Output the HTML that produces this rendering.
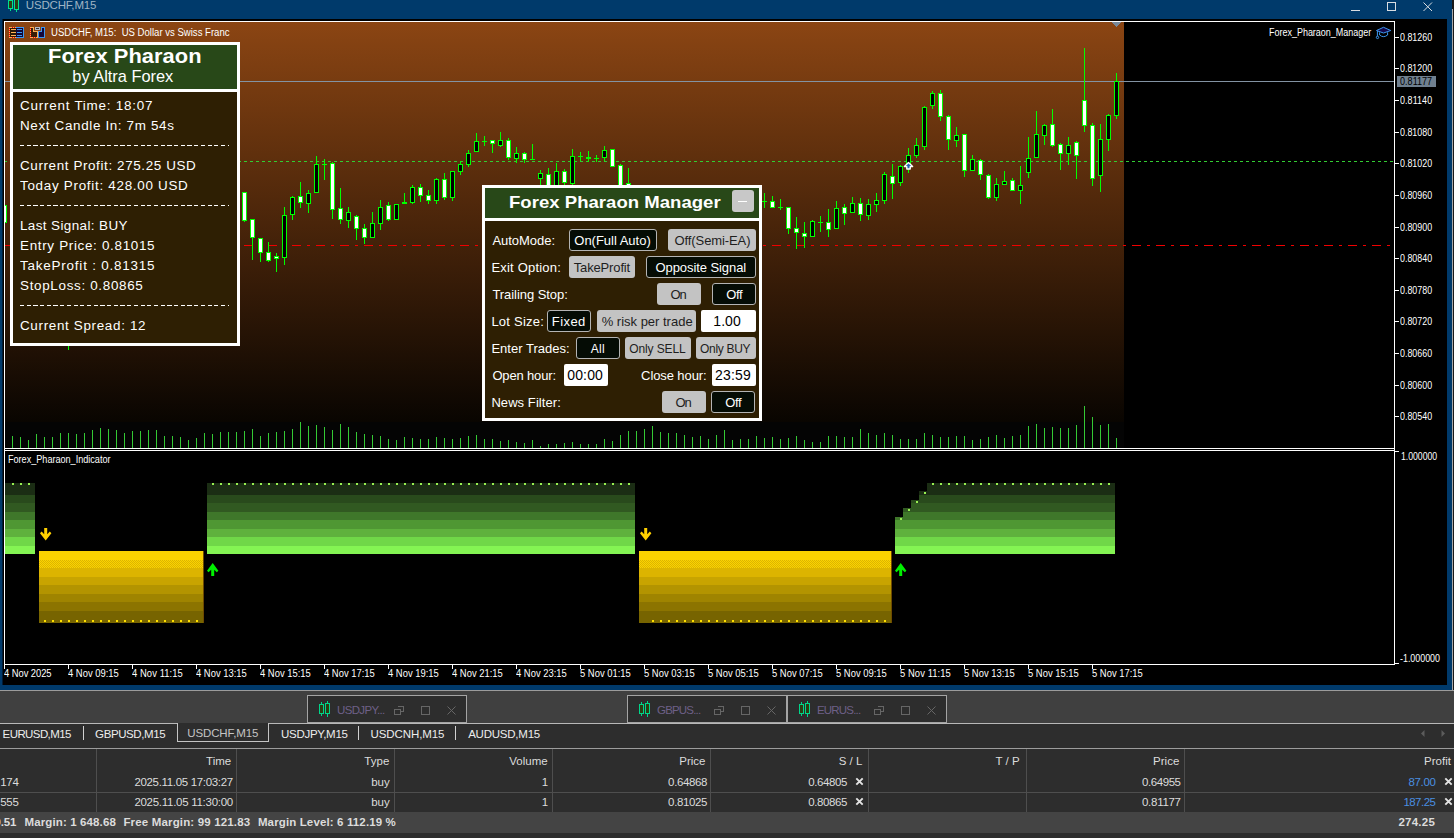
<!DOCTYPE html>
<html><head><meta charset="utf-8"><title>USDCHF,M15</title>
<style>
html,body{margin:0;padding:0}
body{width:1454px;height:838px;position:relative;overflow:hidden;background:#2d2d2d;font-family:"Liberation Sans",sans-serif}
div,span,svg{position:absolute}
.t{white-space:pre;line-height:1;transform-origin:0 0;font-family:"Liberation Sans",sans-serif}
.bd{border-radius:3px;box-sizing:border-box;border:1px solid #b4b4b4;background:#050c05}
.bl{border-radius:3px;background:#c3c3c3}
.bw{border-radius:2px;background:#fff}
</style></head><body>
<div style="left:0px;top:0px;width:1452px;height:690px;background:#003a6b;"></div><div style="left:1452px;top:0px;width:2px;height:690px;background:#1a1a1a;"></div><div style="left:1452px;top:9px;width:1px;height:682px;background:#a8a8a8;"></div><div style="left:2px;top:19px;width:1445px;height:666px;background:#000;"></div><div style="left:2px;top:19px;width:1px;height:666px;background:#001c36;"></div><div style="left:4px;top:21px;width:1391px;height:1px;background:#fff;"></div><div style="left:4px;top:21px;width:1px;height:644px;background:#fff;"></div><div style="left:1394px;top:21px;width:1px;height:644px;background:#fff;"></div><div style="left:4px;top:448px;width:1391px;height:1px;background:#fff;"></div><div style="left:4px;top:450px;width:1391px;height:1px;background:#fff;"></div><div style="left:4px;top:664px;width:1391px;height:1px;background:#fff;"></div><div style="left:5px;top:22px;width:1119px;height:400px;background:linear-gradient(to bottom,#8b4513 0%,#090501 100%)"></div><div style="left:5px;top:422px;width:1119px;height:26px;background:#040404;"></div><svg width="1454" height="700" viewBox="0 0 1454 700" style="left:0;top:0" shape-rendering="crispEdges"><rect x="5" y="81" width="1389" height="1" fill="#8393a3"/><path d="M5 161.5h2M10 161.5h3M16 161.5h3M22 161.5h3M28 161.5h3M34 161.5h3M40 161.5h3M46 161.5h3M52 161.5h3M58 161.5h3M64 161.5h3M70 161.5h3M76 161.5h3M82 161.5h3M88 161.5h3M94 161.5h3M100 161.5h3M106 161.5h3M112 161.5h3M118 161.5h3M124 161.5h3M130 161.5h3M136 161.5h3M142 161.5h3M148 161.5h3M154 161.5h3M160 161.5h3M166 161.5h3M172 161.5h3M178 161.5h3M184 161.5h3M190 161.5h3M196 161.5h3M202 161.5h3M208 161.5h3M214 161.5h3M220 161.5h3M226 161.5h3M232 161.5h3M238 161.5h3M244 161.5h3M250 161.5h3M256 161.5h3M262 161.5h3M268 161.5h3M274 161.5h3M280 161.5h3M286 161.5h3M292 161.5h3M298 161.5h3M304 161.5h3M310 161.5h3M316 161.5h3M322 161.5h3M328 161.5h3M334 161.5h3M340 161.5h3M346 161.5h3M352 161.5h3M358 161.5h3M364 161.5h3M370 161.5h3M376 161.5h3M382 161.5h3M388 161.5h3M394 161.5h3M400 161.5h3M406 161.5h3M412 161.5h3M418 161.5h3M424 161.5h3M430 161.5h3M436 161.5h3M442 161.5h3M448 161.5h3M454 161.5h3M460 161.5h3M466 161.5h3M472 161.5h3M478 161.5h3M484 161.5h3M490 161.5h3M496 161.5h3M502 161.5h3M508 161.5h3M514 161.5h3M520 161.5h3M526 161.5h3M532 161.5h3M538 161.5h3M544 161.5h3M550 161.5h3M556 161.5h3M562 161.5h3M568 161.5h3M574 161.5h3M580 161.5h3M586 161.5h3M592 161.5h3M598 161.5h3M604 161.5h3M610 161.5h3M616 161.5h3M622 161.5h3M628 161.5h3M634 161.5h3M640 161.5h3M646 161.5h3M652 161.5h3M658 161.5h3M664 161.5h3M670 161.5h3M676 161.5h3M682 161.5h3M688 161.5h3M694 161.5h3M700 161.5h3M706 161.5h3M712 161.5h3M718 161.5h3M724 161.5h3M730 161.5h3M736 161.5h3M742 161.5h3M748 161.5h3M754 161.5h3M760 161.5h3M766 161.5h3M772 161.5h3M778 161.5h3M784 161.5h3M790 161.5h3M796 161.5h3M802 161.5h3M808 161.5h3M814 161.5h3M820 161.5h3M826 161.5h3M832 161.5h3M838 161.5h3M844 161.5h3M850 161.5h3M856 161.5h3M862 161.5h3M868 161.5h3M874 161.5h3M880 161.5h3M886 161.5h3M892 161.5h3M898 161.5h3M904 161.5h3M910 161.5h3M916 161.5h3M922 161.5h3M928 161.5h3M934 161.5h3M940 161.5h3M946 161.5h3M952 161.5h3M958 161.5h3M964 161.5h3M970 161.5h3M976 161.5h3M982 161.5h3M988 161.5h3M994 161.5h3M1000 161.5h3M1006 161.5h3M1012 161.5h3M1018 161.5h3M1024 161.5h3M1030 161.5h3M1036 161.5h3M1042 161.5h3M1048 161.5h3M1054 161.5h3M1060 161.5h3M1066 161.5h3M1072 161.5h3M1078 161.5h3M1084 161.5h3M1090 161.5h3M1096 161.5h3M1102 161.5h3M1108 161.5h3M1114 161.5h3M1120 161.5h3M1126 161.5h3M1132 161.5h3M1138 161.5h3M1144 161.5h3M1150 161.5h3M1156 161.5h3M1162 161.5h3M1168 161.5h3M1174 161.5h3M1180 161.5h3M1186 161.5h3M1192 161.5h3M1198 161.5h3M1204 161.5h3M1210 161.5h3M1216 161.5h3M1222 161.5h3M1228 161.5h3M1234 161.5h3M1240 161.5h3M1246 161.5h3M1252 161.5h3M1258 161.5h3M1264 161.5h3M1270 161.5h3M1276 161.5h3M1282 161.5h3M1288 161.5h3M1294 161.5h3M1300 161.5h3M1306 161.5h3M1312 161.5h3M1318 161.5h3M1324 161.5h3M1330 161.5h3M1336 161.5h3M1342 161.5h3M1348 161.5h3M1354 161.5h3M1360 161.5h3M1366 161.5h3M1372 161.5h3M1378 161.5h3M1384 161.5h3M1390 161.5h3" stroke="#32cd32" stroke-width="1" fill="none"/><path d="M5 245.5h8M19 245.5h3M28 245.5h9M43 245.5h3M52 245.5h9M67 245.5h3M76 245.5h9M91 245.5h3M100 245.5h9M115 245.5h3M124 245.5h9M139 245.5h3M148 245.5h9M163 245.5h3M172 245.5h9M187 245.5h3M196 245.5h9M211 245.5h3M220 245.5h9M235 245.5h3M244 245.5h9M259 245.5h3M268 245.5h9M283 245.5h3M292 245.5h9M307 245.5h3M316 245.5h9M331 245.5h3M340 245.5h9M355 245.5h3M364 245.5h9M379 245.5h3M388 245.5h9M403 245.5h3M412 245.5h9M427 245.5h3M436 245.5h9M451 245.5h3M460 245.5h9M475 245.5h3M484 245.5h9M499 245.5h3M508 245.5h9M523 245.5h3M532 245.5h9M547 245.5h3M556 245.5h9M571 245.5h3M580 245.5h9M595 245.5h3M604 245.5h9M619 245.5h3M628 245.5h9M643 245.5h3M652 245.5h9M667 245.5h3M676 245.5h9M691 245.5h3M700 245.5h9M715 245.5h3M724 245.5h9M739 245.5h3M748 245.5h9M763 245.5h3M772 245.5h9M787 245.5h3M796 245.5h9M811 245.5h3M820 245.5h9M835 245.5h3M844 245.5h9M859 245.5h3M868 245.5h9M883 245.5h3M892 245.5h9M907 245.5h3M916 245.5h9M931 245.5h3M940 245.5h9M955 245.5h3M964 245.5h9M979 245.5h3M988 245.5h9M1003 245.5h3M1012 245.5h9M1027 245.5h3M1036 245.5h9M1051 245.5h3M1060 245.5h9M1075 245.5h3M1084 245.5h9M1099 245.5h3M1108 245.5h9M1123 245.5h3M1132 245.5h9M1147 245.5h3M1156 245.5h9M1171 245.5h3M1180 245.5h9M1195 245.5h3M1204 245.5h9M1219 245.5h3M1228 245.5h9M1243 245.5h3M1252 245.5h9M1267 245.5h3M1276 245.5h9M1291 245.5h3M1300 245.5h9M1315 245.5h3M1324 245.5h9M1339 245.5h3M1348 245.5h9M1363 245.5h3M1372 245.5h9M1387 245.5h3" stroke="#f00000" stroke-width="1" fill="none"/><rect x="12" y="436" width="1" height="12" fill="#34c934"/><rect x="20" y="437" width="1" height="11" fill="#34c934"/><rect x="28" y="440" width="1" height="8" fill="#34c934"/><rect x="36" y="434" width="1" height="14" fill="#34c934"/><rect x="44" y="437" width="1" height="11" fill="#34c934"/><rect x="52" y="437" width="1" height="11" fill="#34c934"/><rect x="60" y="433" width="1" height="15" fill="#34c934"/><rect x="68" y="433" width="1" height="15" fill="#34c934"/><rect x="76" y="434" width="1" height="14" fill="#34c934"/><rect x="84" y="433" width="1" height="15" fill="#34c934"/><rect x="92" y="430" width="1" height="18" fill="#34c934"/><rect x="100" y="428" width="1" height="20" fill="#34c934"/><rect x="108" y="429" width="1" height="19" fill="#34c934"/><rect x="116" y="430" width="1" height="18" fill="#34c934"/><rect x="124" y="433" width="1" height="15" fill="#34c934"/><rect x="132" y="431" width="1" height="17" fill="#34c934"/><rect x="140" y="431" width="1" height="17" fill="#34c934"/><rect x="148" y="430" width="1" height="18" fill="#34c934"/><rect x="156" y="430" width="1" height="18" fill="#34c934"/><rect x="164" y="436" width="1" height="12" fill="#34c934"/><rect x="172" y="436" width="1" height="12" fill="#34c934"/><rect x="180" y="437" width="1" height="11" fill="#34c934"/><rect x="188" y="440" width="1" height="8" fill="#34c934"/><rect x="196" y="438" width="1" height="10" fill="#34c934"/><rect x="204" y="433" width="1" height="15" fill="#34c934"/><rect x="212" y="434" width="1" height="14" fill="#34c934"/><rect x="220" y="432" width="1" height="16" fill="#34c934"/><rect x="228" y="432" width="1" height="16" fill="#34c934"/><rect x="236" y="432" width="1" height="16" fill="#34c934"/><rect x="244" y="431" width="1" height="17" fill="#34c934"/><rect x="252" y="429" width="1" height="19" fill="#34c934"/><rect x="260" y="436" width="1" height="12" fill="#34c934"/><rect x="268" y="433" width="1" height="15" fill="#34c934"/><rect x="276" y="432" width="1" height="16" fill="#34c934"/><rect x="284" y="431" width="1" height="17" fill="#34c934"/><rect x="292" y="429" width="1" height="19" fill="#34c934"/><rect x="300" y="422" width="1" height="26" fill="#34c934"/><rect x="308" y="426" width="1" height="22" fill="#34c934"/><rect x="316" y="425" width="1" height="23" fill="#34c934"/><rect x="324" y="427" width="1" height="21" fill="#34c934"/><rect x="332" y="430" width="1" height="18" fill="#34c934"/><rect x="340" y="424" width="1" height="24" fill="#34c934"/><rect x="348" y="427" width="1" height="21" fill="#34c934"/><rect x="356" y="432" width="1" height="16" fill="#34c934"/><rect x="364" y="434" width="1" height="14" fill="#34c934"/><rect x="372" y="435" width="1" height="13" fill="#34c934"/><rect x="380" y="436" width="1" height="12" fill="#34c934"/><rect x="388" y="439" width="1" height="9" fill="#34c934"/><rect x="396" y="440" width="1" height="8" fill="#34c934"/><rect x="404" y="437" width="1" height="11" fill="#34c934"/><rect x="412" y="438" width="1" height="10" fill="#34c934"/><rect x="420" y="439" width="1" height="9" fill="#34c934"/><rect x="428" y="439" width="1" height="9" fill="#34c934"/><rect x="436" y="437" width="1" height="11" fill="#34c934"/><rect x="444" y="438" width="1" height="10" fill="#34c934"/><rect x="452" y="439" width="1" height="9" fill="#34c934"/><rect x="460" y="438" width="1" height="10" fill="#34c934"/><rect x="468" y="436" width="1" height="12" fill="#34c934"/><rect x="476" y="435" width="1" height="13" fill="#34c934"/><rect x="484" y="439" width="1" height="9" fill="#34c934"/><rect x="492" y="439" width="1" height="9" fill="#34c934"/><rect x="500" y="441" width="1" height="7" fill="#34c934"/><rect x="508" y="440" width="1" height="8" fill="#34c934"/><rect x="516" y="442" width="1" height="6" fill="#34c934"/><rect x="524" y="443" width="1" height="5" fill="#34c934"/><rect x="532" y="440" width="1" height="8" fill="#34c934"/><rect x="540" y="446" width="1" height="2" fill="#34c934"/><rect x="548" y="444" width="1" height="4" fill="#34c934"/><rect x="556" y="444" width="1" height="4" fill="#34c934"/><rect x="564" y="443" width="1" height="5" fill="#34c934"/><rect x="572" y="442" width="1" height="6" fill="#34c934"/><rect x="580" y="444" width="1" height="4" fill="#34c934"/><rect x="588" y="444" width="1" height="4" fill="#34c934"/><rect x="596" y="444" width="1" height="4" fill="#34c934"/><rect x="604" y="439" width="1" height="9" fill="#34c934"/><rect x="612" y="441" width="1" height="7" fill="#34c934"/><rect x="620" y="435" width="1" height="13" fill="#34c934"/><rect x="628" y="431" width="1" height="17" fill="#34c934"/><rect x="636" y="431" width="1" height="17" fill="#34c934"/><rect x="644" y="429" width="1" height="19" fill="#34c934"/><rect x="652" y="426" width="1" height="22" fill="#34c934"/><rect x="660" y="432" width="1" height="16" fill="#34c934"/><rect x="668" y="433" width="1" height="15" fill="#34c934"/><rect x="676" y="433" width="1" height="15" fill="#34c934"/><rect x="684" y="435" width="1" height="13" fill="#34c934"/><rect x="692" y="437" width="1" height="11" fill="#34c934"/><rect x="700" y="436" width="1" height="12" fill="#34c934"/><rect x="708" y="439" width="1" height="9" fill="#34c934"/><rect x="716" y="435" width="1" height="13" fill="#34c934"/><rect x="724" y="430" width="1" height="18" fill="#34c934"/><rect x="732" y="440" width="1" height="8" fill="#34c934"/><rect x="740" y="439" width="1" height="9" fill="#34c934"/><rect x="748" y="439" width="1" height="9" fill="#34c934"/><rect x="756" y="436" width="1" height="12" fill="#34c934"/><rect x="764" y="438" width="1" height="10" fill="#34c934"/><rect x="772" y="437" width="1" height="11" fill="#34c934"/><rect x="780" y="439" width="1" height="9" fill="#34c934"/><rect x="788" y="438" width="1" height="10" fill="#34c934"/><rect x="796" y="436" width="1" height="12" fill="#34c934"/><rect x="804" y="440" width="1" height="8" fill="#34c934"/><rect x="812" y="442" width="1" height="6" fill="#34c934"/><rect x="820" y="442" width="1" height="6" fill="#34c934"/><rect x="828" y="436" width="1" height="12" fill="#34c934"/><rect x="836" y="436" width="1" height="12" fill="#34c934"/><rect x="844" y="437" width="1" height="11" fill="#34c934"/><rect x="852" y="437" width="1" height="11" fill="#34c934"/><rect x="860" y="429" width="1" height="19" fill="#34c934"/><rect x="868" y="433" width="1" height="15" fill="#34c934"/><rect x="876" y="435" width="1" height="13" fill="#34c934"/><rect x="884" y="433" width="1" height="15" fill="#34c934"/><rect x="892" y="435" width="1" height="13" fill="#34c934"/><rect x="900" y="439" width="1" height="9" fill="#34c934"/><rect x="908" y="439" width="1" height="9" fill="#34c934"/><rect x="916" y="439" width="1" height="9" fill="#34c934"/><rect x="924" y="433" width="1" height="15" fill="#34c934"/><rect x="932" y="435" width="1" height="13" fill="#34c934"/><rect x="940" y="437" width="1" height="11" fill="#34c934"/><rect x="948" y="437" width="1" height="11" fill="#34c934"/><rect x="956" y="436" width="1" height="12" fill="#34c934"/><rect x="964" y="436" width="1" height="12" fill="#34c934"/><rect x="972" y="440" width="1" height="8" fill="#34c934"/><rect x="980" y="439" width="1" height="9" fill="#34c934"/><rect x="988" y="437" width="1" height="11" fill="#34c934"/><rect x="996" y="435" width="1" height="13" fill="#34c934"/><rect x="1004" y="438" width="1" height="10" fill="#34c934"/><rect x="1012" y="436" width="1" height="12" fill="#34c934"/><rect x="1020" y="435" width="1" height="13" fill="#34c934"/><rect x="1028" y="426" width="1" height="22" fill="#34c934"/><rect x="1036" y="424" width="1" height="24" fill="#34c934"/><rect x="1044" y="428" width="1" height="20" fill="#34c934"/><rect x="1052" y="427" width="1" height="21" fill="#34c934"/><rect x="1060" y="428" width="1" height="20" fill="#34c934"/><rect x="1068" y="428" width="1" height="20" fill="#34c934"/><rect x="1076" y="425" width="1" height="23" fill="#34c934"/><rect x="1084" y="406" width="1" height="42" fill="#34c934"/><rect x="1092" y="417" width="1" height="31" fill="#34c934"/><rect x="1100" y="425" width="1" height="23" fill="#34c934"/><rect x="1108" y="424" width="1" height="24" fill="#34c934"/><rect x="1116" y="438" width="1" height="10" fill="#34c934"/><rect x="5" y="205" width="2" height="18" fill="#00ff00"/><rect x="5" y="206" width="1" height="16" fill="#fff"/><rect x="68" y="340" width="1" height="10" fill="#00ff00"/><rect x="244" y="192" width="1" height="30" fill="#00ff00"/><rect x="242" y="192" width="5" height="29" fill="#00ff00"/><rect x="243" y="193" width="3" height="27" fill="#fff"/><rect x="252" y="219" width="1" height="41" fill="#00ff00"/><rect x="250" y="219" width="5" height="19" fill="#00ff00"/><rect x="251" y="220" width="3" height="17" fill="#fff"/><rect x="260" y="238" width="1" height="24" fill="#00ff00"/><rect x="258" y="238" width="5" height="15" fill="#00ff00"/><rect x="259" y="239" width="3" height="13" fill="#fff"/><rect x="268" y="242" width="1" height="20" fill="#00ff00"/><rect x="266" y="252" width="5" height="9" fill="#00ff00"/><rect x="267" y="253" width="3" height="7" fill="#fff"/><rect x="276" y="253" width="1" height="19" fill="#00ff00"/><rect x="274" y="256" width="5" height="3" fill="#00ff00"/><rect x="275" y="257" width="3" height="1" fill="#fff"/><rect x="284" y="207" width="1" height="58" fill="#00ff00"/><rect x="282" y="215" width="5" height="43" fill="#00ff00"/><rect x="283" y="216" width="3" height="41" fill="#000"/><rect x="292" y="196" width="1" height="24" fill="#00ff00"/><rect x="290" y="197" width="5" height="18" fill="#00ff00"/><rect x="291" y="198" width="3" height="16" fill="#000"/><rect x="300" y="182" width="1" height="26" fill="#00ff00"/><rect x="298" y="196" width="5" height="7" fill="#00ff00"/><rect x="299" y="197" width="3" height="5" fill="#fff"/><rect x="308" y="190" width="1" height="23" fill="#00ff00"/><rect x="306" y="193" width="5" height="11" fill="#00ff00"/><rect x="307" y="194" width="3" height="9" fill="#000"/><rect x="316" y="156" width="1" height="37" fill="#00ff00"/><rect x="314" y="164" width="5" height="29" fill="#00ff00"/><rect x="315" y="165" width="3" height="27" fill="#000"/><rect x="324" y="159" width="1" height="21" fill="#00ff00"/><rect x="322" y="164" width="5" height="1" fill="#00ff00"/><rect x="332" y="162" width="1" height="57" fill="#00ff00"/><rect x="330" y="163" width="5" height="47" fill="#00ff00"/><rect x="331" y="164" width="3" height="45" fill="#fff"/><rect x="340" y="188" width="1" height="36" fill="#00ff00"/><rect x="338" y="208" width="5" height="12" fill="#00ff00"/><rect x="339" y="209" width="3" height="10" fill="#fff"/><rect x="348" y="207" width="1" height="21" fill="#00ff00"/><rect x="346" y="212" width="5" height="9" fill="#00ff00"/><rect x="347" y="213" width="3" height="7" fill="#000"/><rect x="356" y="215" width="1" height="25" fill="#00ff00"/><rect x="354" y="216" width="5" height="13" fill="#00ff00"/><rect x="355" y="217" width="3" height="11" fill="#fff"/><rect x="364" y="224" width="1" height="20" fill="#00ff00"/><rect x="362" y="228" width="5" height="10" fill="#00ff00"/><rect x="363" y="229" width="3" height="8" fill="#fff"/><rect x="372" y="212" width="1" height="26" fill="#00ff00"/><rect x="370" y="223" width="5" height="15" fill="#00ff00"/><rect x="371" y="224" width="3" height="13" fill="#000"/><rect x="380" y="200" width="1" height="30" fill="#00ff00"/><rect x="378" y="207" width="5" height="17" fill="#00ff00"/><rect x="379" y="208" width="3" height="15" fill="#000"/><rect x="388" y="202" width="1" height="19" fill="#00ff00"/><rect x="386" y="205" width="5" height="15" fill="#00ff00"/><rect x="387" y="206" width="3" height="13" fill="#fff"/><rect x="396" y="204" width="1" height="16" fill="#00ff00"/><rect x="394" y="204" width="5" height="16" fill="#00ff00"/><rect x="395" y="205" width="3" height="14" fill="#000"/><rect x="404" y="193" width="1" height="11" fill="#00ff00"/><rect x="402" y="202" width="5" height="2" fill="#00ff00"/><rect x="412" y="185" width="1" height="19" fill="#00ff00"/><rect x="410" y="187" width="5" height="16" fill="#00ff00"/><rect x="411" y="188" width="3" height="14" fill="#000"/><rect x="420" y="184" width="1" height="18" fill="#00ff00"/><rect x="418" y="187" width="5" height="9" fill="#00ff00"/><rect x="419" y="188" width="3" height="7" fill="#fff"/><rect x="428" y="190" width="1" height="14" fill="#00ff00"/><rect x="426" y="195" width="5" height="6" fill="#00ff00"/><rect x="427" y="196" width="3" height="4" fill="#fff"/><rect x="436" y="178" width="1" height="26" fill="#00ff00"/><rect x="434" y="179" width="5" height="22" fill="#00ff00"/><rect x="435" y="180" width="3" height="20" fill="#000"/><rect x="444" y="173" width="1" height="27" fill="#00ff00"/><rect x="442" y="179" width="5" height="19" fill="#00ff00"/><rect x="443" y="180" width="3" height="17" fill="#fff"/><rect x="452" y="171" width="1" height="30" fill="#00ff00"/><rect x="450" y="171" width="5" height="27" fill="#00ff00"/><rect x="451" y="172" width="3" height="25" fill="#000"/><rect x="460" y="161" width="1" height="14" fill="#00ff00"/><rect x="458" y="164" width="5" height="8" fill="#00ff00"/><rect x="459" y="165" width="3" height="6" fill="#000"/><rect x="468" y="150" width="1" height="17" fill="#00ff00"/><rect x="466" y="153" width="5" height="12" fill="#00ff00"/><rect x="467" y="154" width="3" height="10" fill="#000"/><rect x="476" y="133" width="1" height="19" fill="#00ff00"/><rect x="474" y="141" width="5" height="11" fill="#00ff00"/><rect x="475" y="142" width="3" height="9" fill="#000"/><rect x="484" y="136" width="1" height="10" fill="#00ff00"/><rect x="482" y="141" width="5" height="1" fill="#00ff00"/><rect x="492" y="140" width="1" height="13" fill="#00ff00"/><rect x="490" y="140" width="5" height="4" fill="#00ff00"/><rect x="491" y="141" width="3" height="2" fill="#fff"/><rect x="500" y="132" width="1" height="15" fill="#00ff00"/><rect x="498" y="140" width="5" height="6" fill="#00ff00"/><rect x="499" y="141" width="3" height="4" fill="#000"/><rect x="508" y="138" width="1" height="22" fill="#00ff00"/><rect x="506" y="140" width="5" height="18" fill="#00ff00"/><rect x="507" y="141" width="3" height="16" fill="#fff"/><rect x="516" y="147" width="1" height="16" fill="#00ff00"/><rect x="514" y="153" width="5" height="6" fill="#00ff00"/><rect x="515" y="154" width="3" height="4" fill="#000"/><rect x="524" y="152" width="1" height="11" fill="#00ff00"/><rect x="522" y="153" width="5" height="7" fill="#00ff00"/><rect x="523" y="154" width="3" height="5" fill="#fff"/><rect x="532" y="144" width="1" height="16" fill="#00ff00"/><rect x="530" y="159" width="5" height="1" fill="#00ff00"/><rect x="540" y="170" width="1" height="21" fill="#00ff00"/><rect x="538" y="173" width="5" height="6" fill="#00ff00"/><rect x="539" y="174" width="3" height="4" fill="#000"/><rect x="548" y="168" width="1" height="32" fill="#00ff00"/><rect x="546" y="174" width="5" height="22" fill="#00ff00"/><rect x="547" y="175" width="3" height="20" fill="#fff"/><rect x="556" y="163" width="1" height="37" fill="#00ff00"/><rect x="554" y="171" width="5" height="25" fill="#00ff00"/><rect x="555" y="172" width="3" height="23" fill="#000"/><rect x="564" y="169" width="1" height="22" fill="#00ff00"/><rect x="562" y="171" width="5" height="12" fill="#00ff00"/><rect x="563" y="172" width="3" height="10" fill="#fff"/><rect x="572" y="149" width="1" height="37" fill="#00ff00"/><rect x="570" y="156" width="5" height="28" fill="#00ff00"/><rect x="571" y="157" width="3" height="26" fill="#000"/><rect x="580" y="152" width="1" height="9" fill="#00ff00"/><rect x="578" y="156" width="5" height="1" fill="#00ff00"/><rect x="588" y="151" width="1" height="11" fill="#00ff00"/><rect x="586" y="157" width="5" height="2" fill="#00ff00"/><rect x="596" y="155" width="1" height="7" fill="#00ff00"/><rect x="594" y="158" width="5" height="1" fill="#00ff00"/><rect x="604" y="146" width="1" height="15" fill="#00ff00"/><rect x="602" y="150" width="5" height="8" fill="#00ff00"/><rect x="603" y="151" width="3" height="6" fill="#000"/><rect x="612" y="149" width="1" height="18" fill="#00ff00"/><rect x="610" y="149" width="5" height="18" fill="#00ff00"/><rect x="611" y="150" width="3" height="16" fill="#fff"/><rect x="620" y="164" width="1" height="40" fill="#00ff00"/><rect x="618" y="165" width="5" height="35" fill="#00ff00"/><rect x="619" y="166" width="3" height="33" fill="#fff"/><rect x="628" y="168" width="1" height="48" fill="#00ff00"/><rect x="626" y="183" width="5" height="25" fill="#00ff00"/><rect x="627" y="184" width="3" height="23" fill="#fff"/><rect x="764" y="193" width="1" height="15" fill="#00ff00"/><rect x="762" y="201" width="5" height="1" fill="#00ff00"/><rect x="772" y="196" width="1" height="12" fill="#00ff00"/><rect x="770" y="201" width="5" height="7" fill="#00ff00"/><rect x="771" y="202" width="3" height="5" fill="#fff"/><rect x="780" y="199" width="1" height="11" fill="#00ff00"/><rect x="778" y="207" width="5" height="1" fill="#00ff00"/><rect x="788" y="207" width="1" height="27" fill="#00ff00"/><rect x="786" y="207" width="5" height="22" fill="#00ff00"/><rect x="787" y="208" width="3" height="20" fill="#fff"/><rect x="796" y="217" width="1" height="32" fill="#00ff00"/><rect x="794" y="228" width="5" height="5" fill="#00ff00"/><rect x="795" y="229" width="3" height="3" fill="#fff"/><rect x="804" y="222" width="1" height="26" fill="#00ff00"/><rect x="802" y="233" width="5" height="4" fill="#00ff00"/><rect x="803" y="234" width="3" height="2" fill="#fff"/><rect x="812" y="220" width="1" height="17" fill="#00ff00"/><rect x="810" y="221" width="5" height="16" fill="#00ff00"/><rect x="811" y="222" width="3" height="14" fill="#000"/><rect x="820" y="216" width="1" height="16" fill="#00ff00"/><rect x="818" y="222" width="5" height="1" fill="#00ff00"/><rect x="828" y="209" width="1" height="28" fill="#00ff00"/><rect x="826" y="222" width="5" height="8" fill="#00ff00"/><rect x="827" y="223" width="3" height="6" fill="#fff"/><rect x="836" y="201" width="1" height="28" fill="#00ff00"/><rect x="834" y="208" width="5" height="21" fill="#00ff00"/><rect x="835" y="209" width="3" height="19" fill="#000"/><rect x="844" y="204" width="1" height="21" fill="#00ff00"/><rect x="842" y="207" width="5" height="7" fill="#00ff00"/><rect x="843" y="208" width="3" height="5" fill="#fff"/><rect x="852" y="197" width="1" height="16" fill="#00ff00"/><rect x="850" y="203" width="5" height="10" fill="#00ff00"/><rect x="851" y="204" width="3" height="8" fill="#000"/><rect x="860" y="198" width="1" height="23" fill="#00ff00"/><rect x="858" y="203" width="5" height="12" fill="#00ff00"/><rect x="859" y="204" width="3" height="10" fill="#fff"/><rect x="868" y="199" width="1" height="21" fill="#00ff00"/><rect x="866" y="204" width="5" height="12" fill="#00ff00"/><rect x="867" y="205" width="3" height="10" fill="#000"/><rect x="876" y="193" width="1" height="19" fill="#00ff00"/><rect x="874" y="200" width="5" height="5" fill="#00ff00"/><rect x="875" y="201" width="3" height="3" fill="#000"/><rect x="884" y="172" width="1" height="32" fill="#00ff00"/><rect x="882" y="174" width="5" height="27" fill="#00ff00"/><rect x="883" y="175" width="3" height="25" fill="#000"/><rect x="892" y="164" width="1" height="35" fill="#00ff00"/><rect x="890" y="176" width="5" height="8" fill="#00ff00"/><rect x="891" y="177" width="3" height="6" fill="#fff"/><rect x="900" y="165" width="1" height="21" fill="#00ff00"/><rect x="898" y="166" width="5" height="17" fill="#00ff00"/><rect x="899" y="167" width="3" height="15" fill="#000"/><rect x="908" y="148" width="1" height="25" fill="#00ff00"/><rect x="906" y="155" width="5" height="13" fill="#00ff00"/><rect x="907" y="156" width="3" height="11" fill="#000"/><rect x="916" y="138" width="1" height="20" fill="#00ff00"/><rect x="914" y="145" width="5" height="11" fill="#00ff00"/><rect x="915" y="146" width="3" height="9" fill="#000"/><rect x="924" y="106" width="1" height="44" fill="#00ff00"/><rect x="922" y="107" width="5" height="40" fill="#00ff00"/><rect x="923" y="108" width="3" height="38" fill="#000"/><rect x="932" y="91" width="1" height="18" fill="#00ff00"/><rect x="930" y="93" width="5" height="13" fill="#00ff00"/><rect x="931" y="94" width="3" height="11" fill="#000"/><rect x="940" y="90" width="1" height="31" fill="#00ff00"/><rect x="938" y="93" width="5" height="24" fill="#00ff00"/><rect x="939" y="94" width="3" height="22" fill="#fff"/><rect x="948" y="115" width="1" height="35" fill="#00ff00"/><rect x="946" y="116" width="5" height="24" fill="#00ff00"/><rect x="947" y="117" width="3" height="22" fill="#fff"/><rect x="956" y="127" width="1" height="20" fill="#00ff00"/><rect x="954" y="135" width="5" height="6" fill="#00ff00"/><rect x="955" y="136" width="3" height="4" fill="#000"/><rect x="964" y="134" width="1" height="43" fill="#00ff00"/><rect x="962" y="134" width="5" height="37" fill="#00ff00"/><rect x="963" y="135" width="3" height="35" fill="#fff"/><rect x="972" y="155" width="1" height="16" fill="#00ff00"/><rect x="970" y="159" width="5" height="12" fill="#00ff00"/><rect x="971" y="160" width="3" height="10" fill="#000"/><rect x="980" y="159" width="1" height="21" fill="#00ff00"/><rect x="978" y="160" width="5" height="15" fill="#00ff00"/><rect x="979" y="161" width="3" height="13" fill="#fff"/><rect x="988" y="174" width="1" height="25" fill="#00ff00"/><rect x="986" y="175" width="5" height="23" fill="#00ff00"/><rect x="987" y="176" width="3" height="21" fill="#fff"/><rect x="996" y="178" width="1" height="23" fill="#00ff00"/><rect x="994" y="184" width="5" height="14" fill="#00ff00"/><rect x="995" y="185" width="3" height="12" fill="#000"/><rect x="1004" y="171" width="1" height="14" fill="#00ff00"/><rect x="1002" y="181" width="5" height="4" fill="#00ff00"/><rect x="1003" y="182" width="3" height="2" fill="#000"/><rect x="1012" y="178" width="1" height="13" fill="#00ff00"/><rect x="1010" y="180" width="5" height="11" fill="#00ff00"/><rect x="1011" y="181" width="3" height="9" fill="#fff"/><rect x="1020" y="166" width="1" height="38" fill="#00ff00"/><rect x="1018" y="185" width="5" height="6" fill="#00ff00"/><rect x="1019" y="186" width="3" height="4" fill="#000"/><rect x="1028" y="137" width="1" height="41" fill="#00ff00"/><rect x="1026" y="158" width="5" height="15" fill="#00ff00"/><rect x="1027" y="159" width="3" height="13" fill="#000"/><rect x="1036" y="111" width="1" height="47" fill="#00ff00"/><rect x="1034" y="134" width="5" height="24" fill="#00ff00"/><rect x="1035" y="135" width="3" height="22" fill="#000"/><rect x="1044" y="124" width="1" height="21" fill="#00ff00"/><rect x="1042" y="125" width="5" height="11" fill="#00ff00"/><rect x="1043" y="126" width="3" height="9" fill="#000"/><rect x="1052" y="109" width="1" height="38" fill="#00ff00"/><rect x="1050" y="124" width="5" height="22" fill="#00ff00"/><rect x="1051" y="125" width="3" height="20" fill="#fff"/><rect x="1060" y="143" width="1" height="27" fill="#00ff00"/><rect x="1058" y="144" width="5" height="10" fill="#00ff00"/><rect x="1059" y="145" width="3" height="8" fill="#fff"/><rect x="1068" y="137" width="1" height="28" fill="#00ff00"/><rect x="1066" y="145" width="5" height="9" fill="#00ff00"/><rect x="1067" y="146" width="3" height="7" fill="#000"/><rect x="1076" y="141" width="1" height="38" fill="#00ff00"/><rect x="1074" y="142" width="5" height="14" fill="#00ff00"/><rect x="1075" y="143" width="3" height="12" fill="#fff"/><rect x="1084" y="48" width="1" height="84" fill="#00ff00"/><rect x="1082" y="100" width="5" height="26" fill="#00ff00"/><rect x="1083" y="101" width="3" height="24" fill="#fff"/><rect x="1092" y="123" width="1" height="63" fill="#00ff00"/><rect x="1090" y="125" width="5" height="54" fill="#00ff00"/><rect x="1091" y="126" width="3" height="52" fill="#fff"/><rect x="1100" y="124" width="1" height="68" fill="#00ff00"/><rect x="1098" y="139" width="5" height="37" fill="#00ff00"/><rect x="1099" y="140" width="3" height="35" fill="#000"/><rect x="1108" y="114" width="1" height="37" fill="#00ff00"/><rect x="1106" y="115" width="5" height="25" fill="#00ff00"/><rect x="1107" y="116" width="3" height="23" fill="#000"/><rect x="1116" y="73" width="1" height="46" fill="#00ff00"/><rect x="1114" y="81" width="5" height="35" fill="#00ff00"/><rect x="1115" y="82" width="3" height="33" fill="#000"/><path d="M1112 22h9l-4.5 5z" fill="#778899"/><path d="M908.5 162.6 L912.6 166.6 L910.2 166.6 L910.2 169 L906.8 169 L906.8 166.6 L904.4 166.6Z" fill="#2364ad" stroke="#fff" stroke-width="1.4" stroke-linejoin="round" shape-rendering="auto"/></svg><div style="left:1395px;top:37px;width:4px;height:1px;background:#fff;"></div><span class="t" style="font-size:10px;color:#fff;top:33px;letter-spacing:-0.012px;transform:scaleX(0.89);left:1399.70px;">0.81260</span><div style="left:1395px;top:68px;width:4px;height:1px;background:#fff;"></div><span class="t" style="font-size:10px;color:#fff;top:64px;letter-spacing:-0.012px;transform:scaleX(0.89);left:1399.70px;">0.81200</span><div style="left:1395px;top:100px;width:4px;height:1px;background:#fff;"></div><span class="t" style="font-size:10px;color:#fff;top:96px;letter-spacing:0.112px;transform:scaleX(0.89);left:1399.70px;">0.81140</span><div style="left:1395px;top:132px;width:4px;height:1px;background:#fff;"></div><span class="t" style="font-size:10px;color:#fff;top:128px;letter-spacing:-0.012px;transform:scaleX(0.89);left:1399.70px;">0.81080</span><div style="left:1395px;top:163px;width:4px;height:1px;background:#fff;"></div><span class="t" style="font-size:10px;color:#fff;top:159px;letter-spacing:-0.012px;transform:scaleX(0.89);left:1399.70px;">0.81020</span><div style="left:1395px;top:195px;width:4px;height:1px;background:#fff;"></div><span class="t" style="font-size:10px;color:#fff;top:191px;letter-spacing:-0.012px;transform:scaleX(0.89);left:1399.70px;">0.80960</span><div style="left:1395px;top:227px;width:4px;height:1px;background:#fff;"></div><span class="t" style="font-size:10px;color:#fff;top:223px;letter-spacing:-0.012px;transform:scaleX(0.89);left:1399.70px;">0.80900</span><div style="left:1395px;top:258px;width:4px;height:1px;background:#fff;"></div><span class="t" style="font-size:10px;color:#fff;top:254px;letter-spacing:-0.012px;transform:scaleX(0.89);left:1399.70px;">0.80840</span><div style="left:1395px;top:290px;width:4px;height:1px;background:#fff;"></div><span class="t" style="font-size:10px;color:#fff;top:286px;letter-spacing:-0.012px;transform:scaleX(0.89);left:1399.70px;">0.80780</span><div style="left:1395px;top:321px;width:4px;height:1px;background:#fff;"></div><span class="t" style="font-size:10px;color:#fff;top:317px;letter-spacing:-0.012px;transform:scaleX(0.89);left:1399.70px;">0.80720</span><div style="left:1395px;top:353px;width:4px;height:1px;background:#fff;"></div><span class="t" style="font-size:10px;color:#fff;top:349px;letter-spacing:-0.012px;transform:scaleX(0.89);left:1399.70px;">0.80660</span><div style="left:1395px;top:385px;width:4px;height:1px;background:#fff;"></div><span class="t" style="font-size:10px;color:#fff;top:381px;letter-spacing:-0.012px;transform:scaleX(0.89);left:1399.70px;">0.80600</span><div style="left:1395px;top:416px;width:4px;height:1px;background:#fff;"></div><span class="t" style="font-size:10px;color:#fff;top:412px;letter-spacing:-0.012px;transform:scaleX(0.89);left:1399.70px;">0.80540</span><div style="left:1397px;top:76px;width:39px;height:11px;background:#708090;"></div><span class="t" style="font-size:10px;color:#000;top:77px;letter-spacing:0.045px;transform:scaleX(0.9);left:1399.70px;">0.81177</span><div style="left:1395px;top:451px;width:4px;height:1px;background:#fff;"></div><div style="left:1395px;top:663px;width:4px;height:1px;background:#fff;"></div><span class="t" style="font-size:10px;color:#fff;top:452px;letter-spacing:-0.028px;transform:scaleX(0.87);left:1400.80px;">1.000000</span><span class="t" style="font-size:10px;color:#fff;top:654px;letter-spacing:-0.011px;transform:scaleX(0.89);left:1399.80px;">-1.000000</span><span class="t" style="font-size:10px;color:#fff;top:669px;letter-spacing:-0.058px;transform:scaleX(0.94);left:4.00px;">4 Nov 2025</span><div style="left:68px;top:665px;width:1px;height:4px;background:#fff;"></div><span class="t" style="font-size:10px;color:#fff;top:669px;letter-spacing:0.010px;transform:scaleX(0.94);left:68.00px;">4 Nov 09:15</span><div style="left:132px;top:665px;width:1px;height:4px;background:#fff;"></div><span class="t" style="font-size:10px;color:#fff;top:669px;letter-spacing:0.085px;transform:scaleX(0.94);left:132.00px;">4 Nov 11:15</span><div style="left:196px;top:665px;width:1px;height:4px;background:#fff;"></div><span class="t" style="font-size:10px;color:#fff;top:669px;letter-spacing:0.010px;transform:scaleX(0.94);left:196.00px;">4 Nov 13:15</span><div style="left:260px;top:665px;width:1px;height:4px;background:#fff;"></div><span class="t" style="font-size:10px;color:#fff;top:669px;letter-spacing:0.010px;transform:scaleX(0.94);left:260.00px;">4 Nov 15:15</span><div style="left:324px;top:665px;width:1px;height:4px;background:#fff;"></div><span class="t" style="font-size:10px;color:#fff;top:669px;letter-spacing:0.010px;transform:scaleX(0.94);left:324.00px;">4 Nov 17:15</span><div style="left:388px;top:665px;width:1px;height:4px;background:#fff;"></div><span class="t" style="font-size:10px;color:#fff;top:669px;letter-spacing:0.010px;transform:scaleX(0.94);left:388.00px;">4 Nov 19:15</span><div style="left:452px;top:665px;width:1px;height:4px;background:#fff;"></div><span class="t" style="font-size:10px;color:#fff;top:669px;letter-spacing:0.010px;transform:scaleX(0.94);left:452.00px;">4 Nov 21:15</span><div style="left:516px;top:665px;width:1px;height:4px;background:#fff;"></div><span class="t" style="font-size:10px;color:#fff;top:669px;letter-spacing:0.010px;transform:scaleX(0.94);left:516.00px;">4 Nov 23:15</span><div style="left:580px;top:665px;width:1px;height:4px;background:#fff;"></div><span class="t" style="font-size:10px;color:#fff;top:669px;letter-spacing:0.010px;transform:scaleX(0.94);left:580.00px;">5 Nov 01:15</span><div style="left:644px;top:665px;width:1px;height:4px;background:#fff;"></div><span class="t" style="font-size:10px;color:#fff;top:669px;letter-spacing:0.010px;transform:scaleX(0.94);left:644.00px;">5 Nov 03:15</span><div style="left:708px;top:665px;width:1px;height:4px;background:#fff;"></div><span class="t" style="font-size:10px;color:#fff;top:669px;letter-spacing:0.010px;transform:scaleX(0.94);left:708.00px;">5 Nov 05:15</span><div style="left:772px;top:665px;width:1px;height:4px;background:#fff;"></div><span class="t" style="font-size:10px;color:#fff;top:669px;letter-spacing:0.010px;transform:scaleX(0.94);left:772.00px;">5 Nov 07:15</span><div style="left:836px;top:665px;width:1px;height:4px;background:#fff;"></div><span class="t" style="font-size:10px;color:#fff;top:669px;letter-spacing:0.010px;transform:scaleX(0.94);left:836.00px;">5 Nov 09:15</span><div style="left:900px;top:665px;width:1px;height:4px;background:#fff;"></div><span class="t" style="font-size:10px;color:#fff;top:669px;letter-spacing:0.085px;transform:scaleX(0.94);left:900.00px;">5 Nov 11:15</span><div style="left:964px;top:665px;width:1px;height:4px;background:#fff;"></div><span class="t" style="font-size:10px;color:#fff;top:669px;letter-spacing:0.010px;transform:scaleX(0.94);left:964.00px;">5 Nov 13:15</span><div style="left:1028px;top:665px;width:1px;height:4px;background:#fff;"></div><span class="t" style="font-size:10px;color:#fff;top:669px;letter-spacing:0.010px;transform:scaleX(0.94);left:1028.00px;">5 Nov 15:15</span><div style="left:1092px;top:665px;width:1px;height:4px;background:#fff;"></div><span class="t" style="font-size:10px;color:#fff;top:669px;letter-spacing:0.010px;transform:scaleX(0.94);left:1092.00px;">5 Nov 17:15</span><div style="left:4px;top:665px;width:1px;height:4px;background:#fff;"></div><span class="t" style="font-size:10px;color:#fff;top:28px;letter-spacing:0.006px;transform:scaleX(0.955);left:50.50px;">USDCHF, M15:  US Dollar vs Swiss Franc</span><span class="t" style="font-size:10px;color:#fff;top:28px;letter-spacing:-0.020px;transform:scaleX(0.9);left:1268.70px;">Forex_Pharaon_Manager</span><span class="t" style="font-size:10px;color:#fff;top:455px;letter-spacing:-0.010px;transform:scaleX(0.91);left:7.60px;">Forex_Pharaon_Indicator</span><span class="t" style="font-size:11.5px;color:#9fb4c4;top:0px;letter-spacing:-0.179px;left:25.80px;">USDCHF,M15</span><svg width="1454" height="60" viewBox="0 0 1454 60" style="left:0;top:0" shape-rendering="crispEdges"><rect x="8" y="0" width="5" height="9" fill="#00e18c"/><rect x="9" y="1" width="3" height="7" fill="#2c3c12"/><rect x="10" y="9" width="1" height="2" fill="#00e18c"/><rect x="14" y="0" width="5" height="10" fill="#00e18c"/><rect x="15" y="0" width="3" height="9" fill="#2c3c12"/><rect x="16" y="10" width="1" height="2" fill="#00e18c"/><rect x="1351" y="10" width="9" height="1" fill="#d8dde2"/><rect x="1387.5" y="2.5" width="8" height="8" fill="none" stroke="#d8dde2" stroke-width="1"/><path d="M1423.5 2.5l8.5 8.5M1432 2.5l-8.5 8.5" stroke="#d8dde2" stroke-width="1" fill="none" shape-rendering="auto"/><rect x="9" y="27" width="7" height="11" fill="#ffb055"/><rect x="16" y="27" width="8" height="11" fill="#3c96f0"/><rect x="10" y="28" width="6" height="9" fill="#2a1a08"/><rect x="16" y="28" width="7" height="9" fill="#10083a"/><rect x="11" y="29" width="5" height="1" fill="#ffb055"/><rect x="17" y="29" width="5" height="1" fill="#3c96f0"/><rect x="11" y="32" width="5" height="1" fill="#ffb055"/><rect x="17" y="32" width="5" height="1" fill="#3c96f0"/><rect x="11" y="35" width="5" height="1" fill="#ffb055"/><rect x="17" y="35" width="5" height="1" fill="#3c96f0"/><rect x="9" y="28" width="1" height="1" fill="#ff0000"/><rect x="9" y="30" width="1" height="1" fill="#ff0000"/><rect x="9" y="32" width="1" height="1" fill="#ff0000"/><rect x="9" y="34" width="1" height="1" fill="#ff0000"/><rect x="9" y="36" width="1" height="1" fill="#ff0000"/><rect x="12" y="27" width="1" height="1" fill="#ff0000"/><rect x="12" y="37" width="1" height="1" fill="#ff0000"/><rect x="14" y="27" width="1" height="1" fill="#ff0000"/><rect x="14" y="37" width="1" height="1" fill="#ff0000"/><path d="M30.5 27.5h3v4h3.5v6h-6.5z" fill="#3a1e08" stroke="#ffb055" stroke-width="1"/><rect x="30" y="28" width="1" height="1" fill="#ff0000"/><rect x="30" y="30" width="1" height="1" fill="#ff0000"/><rect x="30" y="32" width="1" height="1" fill="#ff0000"/><rect x="30" y="34" width="1" height="1" fill="#ff0000"/><rect x="30" y="36" width="1" height="1" fill="#ff0000"/><rect x="33" y="37" width="1" height="1" fill="#ff0000"/><rect x="35" y="37" width="1" height="1" fill="#ff0000"/><path d="M44.5 27.5h-3v4h-3v6h6z" fill="#14083c" stroke="#3c96f0" stroke-width="1"/><rect x="35" y="27" width="5" height="3" fill="#b4bcc6"/><rect x="36" y="28" width="3" height="1" fill="#30343c"/><g shape-rendering="auto" stroke="#3c96f0" stroke-width="1" fill="#14084a"><path d="M1376.5 30.5L1383.5 27.3L1390.8 30.5L1383.5 33Z"/><path d="M1379.6 32.3V35Q1383.5 38.3 1387.6 35V32.3" fill="none"/><path d="M1377.4 31V36.2" fill="none"/><circle cx="1377.5" cy="37.4" r="1.2" fill="none"/></g></svg><svg width="1454" height="700" viewBox="0 0 1454 700" style="left:0;top:0" shape-rendering="crispEdges"><defs><pattern id="dz" width="2" height="2" patternUnits="userSpaceOnUse"><rect width="2" height="2" fill="#fbd300"/><rect width="1" height="1" fill="#dcb400"/><rect x="1" y="1" width="1" height="1" fill="#dcb400"/></pattern></defs><rect x="5" y="483" width="30" height="12" fill="#1b2d14"/><rect x="5" y="495" width="30" height="8" fill="#294a1c"/><rect x="5" y="503" width="30" height="9" fill="#315921"/><rect x="5" y="512" width="30" height="8" fill="#3f772a"/><rect x="5" y="520" width="30" height="9" fill="#4f9733"/><rect x="5" y="529" width="30" height="8" fill="#5fb13d"/><rect x="5" y="537" width="30" height="9" fill="#70d748"/><rect x="5" y="546" width="30" height="8" fill="#84f453"/><rect x="207" y="483" width="428" height="12" fill="#1b2d14"/><rect x="207" y="495" width="428" height="8" fill="#294a1c"/><rect x="207" y="503" width="428" height="9" fill="#315921"/><rect x="207" y="512" width="428" height="8" fill="#3f772a"/><rect x="207" y="520" width="428" height="9" fill="#4f9733"/><rect x="207" y="529" width="428" height="8" fill="#5fb13d"/><rect x="207" y="537" width="428" height="9" fill="#70d748"/><rect x="207" y="546" width="428" height="8" fill="#84f453"/><rect x="39" y="551" width="164" height="9" fill="#fbd300"/><rect x="39" y="560" width="164" height="8" fill="#ecc500"/><rect x="39" y="568" width="164" height="9" fill="#dcb400"/><rect x="39" y="577" width="164" height="8" fill="#c8a400"/><rect x="39" y="585" width="164" height="9" fill="#b39400"/><rect x="39" y="594" width="164" height="8" fill="#9f8400"/><rect x="39" y="602" width="164" height="9" fill="#8c7400"/><rect x="39" y="611" width="164" height="12" fill="#776400"/><rect x="39" y="560" width="164" height="8" fill="url(#dz)"/><rect x="639" y="551" width="252" height="9" fill="#fbd300"/><rect x="639" y="560" width="252" height="8" fill="#ecc500"/><rect x="639" y="568" width="252" height="9" fill="#dcb400"/><rect x="639" y="577" width="252" height="8" fill="#c8a400"/><rect x="639" y="585" width="252" height="9" fill="#b39400"/><rect x="639" y="594" width="252" height="8" fill="#9f8400"/><rect x="639" y="602" width="252" height="9" fill="#8c7400"/><rect x="639" y="611" width="252" height="12" fill="#776400"/><rect x="639" y="560" width="252" height="8" fill="url(#dz)"/><rect x="203" y="551" width="1" height="72" fill="#6e4a00"/><rect x="891" y="551" width="1" height="72" fill="#6e4a00"/><rect x="895" y="517" width="8" height="3" fill="#3f772a"/><rect x="895" y="520" width="8" height="9" fill="#4f9733"/><rect x="895" y="529" width="8" height="8" fill="#5fb13d"/><rect x="895" y="537" width="8" height="9" fill="#70d748"/><rect x="895" y="546" width="8" height="8" fill="#84f453"/><rect x="903" y="508" width="8" height="4" fill="#315921"/><rect x="903" y="512" width="8" height="8" fill="#3f772a"/><rect x="903" y="520" width="8" height="9" fill="#4f9733"/><rect x="903" y="529" width="8" height="8" fill="#5fb13d"/><rect x="903" y="537" width="8" height="9" fill="#70d748"/><rect x="903" y="546" width="8" height="8" fill="#84f453"/><rect x="911" y="500" width="8" height="3" fill="#294a1c"/><rect x="911" y="503" width="8" height="9" fill="#315921"/><rect x="911" y="512" width="8" height="8" fill="#3f772a"/><rect x="911" y="520" width="8" height="9" fill="#4f9733"/><rect x="911" y="529" width="8" height="8" fill="#5fb13d"/><rect x="911" y="537" width="8" height="9" fill="#70d748"/><rect x="911" y="546" width="8" height="8" fill="#84f453"/><rect x="919" y="491" width="8" height="4" fill="#1b2d14"/><rect x="919" y="495" width="8" height="8" fill="#294a1c"/><rect x="919" y="503" width="8" height="9" fill="#315921"/><rect x="919" y="512" width="8" height="8" fill="#3f772a"/><rect x="919" y="520" width="8" height="9" fill="#4f9733"/><rect x="919" y="529" width="8" height="8" fill="#5fb13d"/><rect x="919" y="537" width="8" height="9" fill="#70d748"/><rect x="919" y="546" width="8" height="8" fill="#84f453"/><rect x="927" y="483" width="188" height="12" fill="#1b2d14"/><rect x="927" y="495" width="188" height="8" fill="#294a1c"/><rect x="927" y="503" width="188" height="9" fill="#315921"/><rect x="927" y="512" width="188" height="8" fill="#3f772a"/><rect x="927" y="520" width="188" height="9" fill="#4f9733"/><rect x="927" y="529" width="188" height="8" fill="#5fb13d"/><rect x="927" y="537" width="188" height="9" fill="#70d748"/><rect x="927" y="546" width="188" height="8" fill="#84f453"/><rect x="12" y="483" width="2" height="2" fill="#98f052"/><rect x="20" y="483" width="2" height="2" fill="#98f052"/><rect x="28" y="483" width="2" height="2" fill="#98f052"/><rect x="44" y="620" width="2" height="2" fill="#ffe000"/><rect x="52" y="620" width="2" height="2" fill="#ffe000"/><rect x="60" y="620" width="2" height="2" fill="#ffe000"/><rect x="68" y="620" width="2" height="2" fill="#ffe000"/><rect x="76" y="620" width="2" height="2" fill="#ffe000"/><rect x="84" y="620" width="2" height="2" fill="#ffe000"/><rect x="92" y="620" width="2" height="2" fill="#ffe000"/><rect x="100" y="620" width="2" height="2" fill="#ffe000"/><rect x="108" y="620" width="2" height="2" fill="#ffe000"/><rect x="116" y="620" width="2" height="2" fill="#ffe000"/><rect x="124" y="620" width="2" height="2" fill="#ffe000"/><rect x="132" y="620" width="2" height="2" fill="#ffe000"/><rect x="140" y="620" width="2" height="2" fill="#ffe000"/><rect x="148" y="620" width="2" height="2" fill="#ffe000"/><rect x="156" y="620" width="2" height="2" fill="#ffe000"/><rect x="164" y="620" width="2" height="2" fill="#ffe000"/><rect x="172" y="620" width="2" height="2" fill="#ffe000"/><rect x="180" y="620" width="2" height="2" fill="#ffe000"/><rect x="188" y="620" width="2" height="2" fill="#ffe000"/><rect x="196" y="620" width="2" height="2" fill="#ffe000"/><rect x="212" y="483" width="2" height="2" fill="#98f052"/><rect x="220" y="483" width="2" height="2" fill="#98f052"/><rect x="228" y="483" width="2" height="2" fill="#98f052"/><rect x="236" y="483" width="2" height="2" fill="#98f052"/><rect x="244" y="483" width="2" height="2" fill="#98f052"/><rect x="252" y="483" width="2" height="2" fill="#98f052"/><rect x="260" y="483" width="2" height="2" fill="#98f052"/><rect x="268" y="483" width="2" height="2" fill="#98f052"/><rect x="276" y="483" width="2" height="2" fill="#98f052"/><rect x="284" y="483" width="2" height="2" fill="#98f052"/><rect x="292" y="483" width="2" height="2" fill="#98f052"/><rect x="300" y="483" width="2" height="2" fill="#98f052"/><rect x="308" y="483" width="2" height="2" fill="#98f052"/><rect x="316" y="483" width="2" height="2" fill="#98f052"/><rect x="324" y="483" width="2" height="2" fill="#98f052"/><rect x="332" y="483" width="2" height="2" fill="#98f052"/><rect x="340" y="483" width="2" height="2" fill="#98f052"/><rect x="348" y="483" width="2" height="2" fill="#98f052"/><rect x="356" y="483" width="2" height="2" fill="#98f052"/><rect x="364" y="483" width="2" height="2" fill="#98f052"/><rect x="372" y="483" width="2" height="2" fill="#98f052"/><rect x="380" y="483" width="2" height="2" fill="#98f052"/><rect x="388" y="483" width="2" height="2" fill="#98f052"/><rect x="396" y="483" width="2" height="2" fill="#98f052"/><rect x="404" y="483" width="2" height="2" fill="#98f052"/><rect x="412" y="483" width="2" height="2" fill="#98f052"/><rect x="420" y="483" width="2" height="2" fill="#98f052"/><rect x="428" y="483" width="2" height="2" fill="#98f052"/><rect x="436" y="483" width="2" height="2" fill="#98f052"/><rect x="444" y="483" width="2" height="2" fill="#98f052"/><rect x="452" y="483" width="2" height="2" fill="#98f052"/><rect x="460" y="483" width="2" height="2" fill="#98f052"/><rect x="468" y="483" width="2" height="2" fill="#98f052"/><rect x="476" y="483" width="2" height="2" fill="#98f052"/><rect x="484" y="483" width="2" height="2" fill="#98f052"/><rect x="492" y="483" width="2" height="2" fill="#98f052"/><rect x="500" y="483" width="2" height="2" fill="#98f052"/><rect x="508" y="483" width="2" height="2" fill="#98f052"/><rect x="516" y="483" width="2" height="2" fill="#98f052"/><rect x="524" y="483" width="2" height="2" fill="#98f052"/><rect x="532" y="483" width="2" height="2" fill="#98f052"/><rect x="540" y="483" width="2" height="2" fill="#98f052"/><rect x="548" y="483" width="2" height="2" fill="#98f052"/><rect x="556" y="483" width="2" height="2" fill="#98f052"/><rect x="564" y="483" width="2" height="2" fill="#98f052"/><rect x="572" y="483" width="2" height="2" fill="#98f052"/><rect x="580" y="483" width="2" height="2" fill="#98f052"/><rect x="588" y="483" width="2" height="2" fill="#98f052"/><rect x="596" y="483" width="2" height="2" fill="#98f052"/><rect x="604" y="483" width="2" height="2" fill="#98f052"/><rect x="612" y="483" width="2" height="2" fill="#98f052"/><rect x="620" y="483" width="2" height="2" fill="#98f052"/><rect x="628" y="483" width="2" height="2" fill="#98f052"/><rect x="652" y="620" width="2" height="2" fill="#ffe000"/><rect x="660" y="620" width="2" height="2" fill="#ffe000"/><rect x="668" y="620" width="2" height="2" fill="#ffe000"/><rect x="676" y="620" width="2" height="2" fill="#ffe000"/><rect x="684" y="620" width="2" height="2" fill="#ffe000"/><rect x="692" y="620" width="2" height="2" fill="#ffe000"/><rect x="700" y="620" width="2" height="2" fill="#ffe000"/><rect x="708" y="620" width="2" height="2" fill="#ffe000"/><rect x="716" y="620" width="2" height="2" fill="#ffe000"/><rect x="724" y="620" width="2" height="2" fill="#ffe000"/><rect x="732" y="620" width="2" height="2" fill="#ffe000"/><rect x="740" y="620" width="2" height="2" fill="#ffe000"/><rect x="748" y="620" width="2" height="2" fill="#ffe000"/><rect x="756" y="620" width="2" height="2" fill="#ffe000"/><rect x="764" y="620" width="2" height="2" fill="#ffe000"/><rect x="772" y="620" width="2" height="2" fill="#ffe000"/><rect x="780" y="620" width="2" height="2" fill="#ffe000"/><rect x="788" y="620" width="2" height="2" fill="#ffe000"/><rect x="796" y="620" width="2" height="2" fill="#ffe000"/><rect x="804" y="620" width="2" height="2" fill="#ffe000"/><rect x="812" y="620" width="2" height="2" fill="#ffe000"/><rect x="820" y="620" width="2" height="2" fill="#ffe000"/><rect x="828" y="620" width="2" height="2" fill="#ffe000"/><rect x="836" y="620" width="2" height="2" fill="#ffe000"/><rect x="844" y="620" width="2" height="2" fill="#ffe000"/><rect x="852" y="620" width="2" height="2" fill="#ffe000"/><rect x="860" y="620" width="2" height="2" fill="#ffe000"/><rect x="868" y="620" width="2" height="2" fill="#ffe000"/><rect x="876" y="620" width="2" height="2" fill="#ffe000"/><rect x="884" y="620" width="2" height="2" fill="#ffe000"/><rect x="932" y="483" width="2" height="2" fill="#98f052"/><rect x="940" y="483" width="2" height="2" fill="#98f052"/><rect x="948" y="483" width="2" height="2" fill="#98f052"/><rect x="956" y="483" width="2" height="2" fill="#98f052"/><rect x="964" y="483" width="2" height="2" fill="#98f052"/><rect x="972" y="483" width="2" height="2" fill="#98f052"/><rect x="980" y="483" width="2" height="2" fill="#98f052"/><rect x="988" y="483" width="2" height="2" fill="#98f052"/><rect x="996" y="483" width="2" height="2" fill="#98f052"/><rect x="1004" y="483" width="2" height="2" fill="#98f052"/><rect x="1012" y="483" width="2" height="2" fill="#98f052"/><rect x="1020" y="483" width="2" height="2" fill="#98f052"/><rect x="1028" y="483" width="2" height="2" fill="#98f052"/><rect x="1036" y="483" width="2" height="2" fill="#98f052"/><rect x="1044" y="483" width="2" height="2" fill="#98f052"/><rect x="1052" y="483" width="2" height="2" fill="#98f052"/><rect x="1060" y="483" width="2" height="2" fill="#98f052"/><rect x="1068" y="483" width="2" height="2" fill="#98f052"/><rect x="1076" y="483" width="2" height="2" fill="#98f052"/><rect x="1084" y="483" width="2" height="2" fill="#98f052"/><rect x="1092" y="483" width="2" height="2" fill="#98f052"/><rect x="1100" y="483" width="2" height="2" fill="#98f052"/><rect x="1108" y="483" width="2" height="2" fill="#98f052"/><rect x="900" y="518" width="2" height="2" fill="#98f052"/><rect x="908" y="509" width="2" height="2" fill="#98f052"/><rect x="916" y="501" width="2" height="2" fill="#98f052"/><rect x="924" y="492" width="2" height="2" fill="#98f052"/><path shape-rendering="auto" d="M44.2 528h3v6.2l2.6-2.6l1.6 1.6l-5.7 7.2l-5.7-7.2l1.6-1.6l2.6 2.6z" fill="#ffd000"/><path shape-rendering="auto" d="M644.2 528h3v6.2l2.6-2.6l1.6 1.6l-5.7 7.2l-5.7-7.2l1.6-1.6l2.6 2.6z" fill="#ffd000"/><path shape-rendering="auto" d="M211.2 576.1h3v-6.4l2.6 2.6l1.6-1.6l-5.7-7.6l-5.7 7.6l1.6 1.6l2.6-2.6z" fill="#00f000"/><path shape-rendering="auto" d="M899.2 576.1h3v-6.4l2.6 2.6l1.6-1.6l-5.7-7.6l-5.7 7.6l1.6 1.6l2.6-2.6z" fill="#00f000"/></svg><div style="left:10px;top:42px;width:230px;height:304px;background:#fff;"></div><div style="left:13px;top:45px;width:224px;height:44px;background:#284818;"></div><div style="left:13px;top:92px;width:224px;height:251px;background:#2e1f03;"></div><span class="t" style="font-size:19.5px;color:#fff;top:47px;font-weight:700;letter-spacing:0.046px;transform:scaleX(1.12);left:47.68px;">Forex Pharaon</span><span class="t" style="font-size:16.4px;color:#fff;top:68px;letter-spacing:-0.009px;left:72.30px;">by Altra Forex</span><span class="t" style="font-size:12px;color:#fff;top:100px;letter-spacing:0.680px;transform:scaleX(1.12);left:20.20px;">Current Time: 18:07</span><span class="t" style="font-size:12px;color:#fff;top:120px;letter-spacing:0.572px;transform:scaleX(1.12);left:20.20px;">Next Candle In: 7m 54s</span><div style="left:20px;top:145px;width:209px;height:1px;background:repeating-linear-gradient(to right,#fff 0,#fff 4.2px,transparent 4.2px,transparent 6.7px)"></div><span class="t" style="font-size:12px;color:#fff;top:160px;letter-spacing:0.540px;transform:scaleX(1.12);left:20.20px;">Current Profit: 275.25 USD</span><span class="t" style="font-size:12px;color:#fff;top:180px;letter-spacing:0.628px;transform:scaleX(1.12);left:20.20px;">Today Profit: 428.00 USD</span><div style="left:20px;top:205px;width:209px;height:1px;background:repeating-linear-gradient(to right,#fff 0,#fff 4.2px,transparent 4.2px,transparent 6.7px)"></div><span class="t" style="font-size:12px;color:#fff;top:220px;letter-spacing:0.351px;transform:scaleX(1.12);left:20.20px;">Last Signal: BUY</span><span class="t" style="font-size:12px;color:#fff;top:240px;letter-spacing:0.600px;transform:scaleX(1.12);left:20.20px;">Entry Price: 0.81015</span><span class="t" style="font-size:12px;color:#fff;top:260px;letter-spacing:0.705px;transform:scaleX(1.12);left:20.20px;">TakeProfit : 0.81315</span><span class="t" style="font-size:12px;color:#fff;top:280px;letter-spacing:0.600px;transform:scaleX(1.12);left:20.20px;">StopLoss: 0.80865</span><div style="left:20px;top:305px;width:209px;height:1px;background:repeating-linear-gradient(to right,#fff 0,#fff 4.2px,transparent 4.2px,transparent 6.7px)"></div><span class="t" style="font-size:12px;color:#fff;top:320px;letter-spacing:0.590px;transform:scaleX(1.12);left:20.20px;">Current Spread: 12</span><div style="left:482px;top:185px;width:280px;height:236px;background:#fff;"></div><div style="left:485px;top:188px;width:274px;height:30px;background:#284818;"></div><div style="left:485px;top:221px;width:274px;height:197px;background:#2e1f03;"></div><span class="t" style="font-size:17px;color:#fff;top:194px;font-weight:700;letter-spacing:0.026px;transform:scaleX(1.09);left:508.81px;">Forex Pharaon Manager</span><div style="left:732px;top:190px;width:22px;height:22px;background:#c8c8c8;border-radius:3px"></div><div style="left:738px;top:201px;width:9px;height:1px;background:#fff;"></div><span class="t" style="font-size:13px;color:#fff;top:234px;letter-spacing:-0.033px;left:492.40px;">AutoMode:</span><div class="bd" style="left:569px;top:229px;width:88px;height:22px"></div><span class="t" style="font-size:13px;color:#fff;top:234px;letter-spacing:-0.014px;left:574.30px;">On(Full Auto)</span><div class="bl" style="left:668px;top:229px;width:88px;height:22px"></div><span class="t" style="font-size:13px;color:#1e1e1e;top:234px;letter-spacing:-0.093px;left:674.50px;">Off(Semi-EA)</span><span class="t" style="font-size:13px;color:#fff;top:261px;letter-spacing:0.201px;left:491.40px;">Exit Option:</span><div class="bl" style="left:569px;top:256px;width:66px;height:22px"></div><span class="t" style="font-size:13px;color:#1e1e1e;top:261px;letter-spacing:-0.143px;left:573.70px;">TakeProfit</span><div class="bd" style="left:646px;top:256px;width:110px;height:22px"></div><span class="t" style="font-size:13px;color:#fff;top:261px;letter-spacing:-0.078px;left:655.50px;">Opposite Signal</span><span class="t" style="font-size:13px;color:#fff;top:288px;letter-spacing:-0.054px;left:492.40px;">Trailing Stop:</span><div class="bl" style="left:657px;top:283px;width:44px;height:22px"></div><span class="t" style="font-size:13px;color:#1e1e1e;top:288px;letter-spacing:-1.212px;left:670.50px;">On</span><div class="bd" style="left:712px;top:283px;width:44px;height:22px"></div><span class="t" style="font-size:13px;color:#fff;top:288px;letter-spacing:-0.444px;left:726.30px;">Off</span><span class="t" style="font-size:13px;color:#fff;top:315px;letter-spacing:0.228px;left:491.40px;">Lot Size:</span><div class="bd" style="left:547px;top:310px;width:44px;height:22px"></div><span class="t" style="font-size:13px;color:#fff;top:315px;letter-spacing:0.435px;left:551.80px;">Fixed</span><div class="bl" style="left:597px;top:310px;width:99px;height:22px"></div><span class="t" style="font-size:13px;color:#1e1e1e;top:315px;letter-spacing:-0.007px;left:601.70px;">% risk per trade</span><div class="bw" style="left:701px;top:310px;width:55px;height:22px"></div><span class="t" style="font-size:14px;color:#000;top:314px;letter-spacing:0.046px;left:713.30px;">1.00</span><span class="t" style="font-size:13px;color:#fff;top:342px;letter-spacing:0.020px;left:491.40px;">Enter Trades:</span><div class="bd" style="left:576px;top:337px;width:44px;height:22px"></div><span class="t" style="font-size:12px;color:#fff;top:343px;letter-spacing:0.315px;left:590.70px;">All</span><div class="bl" style="left:625px;top:337px;width:66px;height:22px"></div><span class="t" style="font-size:12px;color:#1e1e1e;top:343px;letter-spacing:-0.111px;left:629.20px;">Only SELL</span><div class="bl" style="left:696px;top:337px;width:60px;height:22px"></div><span class="t" style="font-size:12px;color:#1e1e1e;top:343px;letter-spacing:-0.297px;left:700.00px;">Only BUY</span><span class="t" style="font-size:13px;color:#fff;top:369px;letter-spacing:-0.159px;left:492.40px;">Open hour:</span><div class="bw" style="left:564px;top:364px;width:44px;height:22px"></div><span class="t" style="font-size:14px;color:#000;top:368px;letter-spacing:0.163px;left:567.20px;">00:00</span><span class="t" style="font-size:13px;color:#fff;top:369px;letter-spacing:-0.097px;left:641.10px;">Close hour:</span><div class="bw" style="left:712px;top:364px;width:44px;height:22px"></div><span class="t" style="font-size:14px;color:#000;top:368px;letter-spacing:0.163px;left:715.00px;">23:59</span><span class="t" style="font-size:13px;color:#fff;top:396px;letter-spacing:0.072px;left:491.40px;">News Filter:</span><div class="bl" style="left:662px;top:391px;width:44px;height:22px"></div><span class="t" style="font-size:13px;color:#1e1e1e;top:396px;letter-spacing:-1.212px;left:675.50px;">On</span><div class="bd" style="left:711px;top:391px;width:44px;height:22px"></div><span class="t" style="font-size:13px;color:#fff;top:396px;letter-spacing:-0.444px;left:725.30px;">Off</span><div style="left:0px;top:690px;width:1454px;height:1px;background:#9c9c9c;"></div><div style="left:0px;top:691px;width:1454px;height:32px;background:#404040;"></div><div style="left:0px;top:723px;width:1454px;height:1px;background:#b8b8b8;"></div><div style="left:0px;top:724px;width:1454px;height:24px;background:#2d2d2d;"></div><div style="left:0px;top:748px;width:1454px;height:1px;background:#9c9c9c;"></div><div style="left:0px;top:749px;width:1454px;height:63px;background:#2d2d2d;"></div><div style="left:0px;top:812px;width:1454px;height:21px;background:#444444;"></div><div style="left:0px;top:833px;width:1454px;height:5px;background:#2d2d2d;"></div><div style="left:96px;top:749px;width:1px;height:63px;background:#4e4e4e;"></div><div style="left:236px;top:749px;width:1px;height:63px;background:#4e4e4e;"></div><div style="left:394px;top:749px;width:1px;height:63px;background:#4e4e4e;"></div><div style="left:552px;top:749px;width:1px;height:63px;background:#4e4e4e;"></div><div style="left:710px;top:749px;width:1px;height:63px;background:#4e4e4e;"></div><div style="left:868px;top:749px;width:1px;height:63px;background:#4e4e4e;"></div><div style="left:1026px;top:749px;width:1px;height:63px;background:#4e4e4e;"></div><div style="left:1184px;top:749px;width:1px;height:63px;background:#4e4e4e;"></div><div style="left:0px;top:792px;width:1454px;height:1px;background:#4e4e4e;"></div><div style="left:177px;top:723px;width:92px;height:19px;background:#2d2d2d;box-sizing:border-box;border:1px solid #c4c4c4;border-top:none"></div><span class="t" style="font-size:11.5px;color:#ececec;top:729px;letter-spacing:-0.592px;left:2.60px;">EURUSD,M15</span><span class="t" style="font-size:11.5px;color:#ececec;top:729px;letter-spacing:-0.404px;left:95.10px;">GBPUSD,M15</span><span class="t" style="font-size:11.5px;color:#c4c4c4;top:728px;letter-spacing:-0.135px;left:187.30px;">USDCHF,M15</span><span class="t" style="font-size:11.5px;color:#ececec;top:729px;letter-spacing:-0.295px;left:281.10px;">USDJPY,M15</span><span class="t" style="font-size:11.5px;color:#ececec;top:729px;letter-spacing:-0.107px;left:370.60px;">USDCNH,M15</span><span class="t" style="font-size:11.5px;color:#ececec;top:729px;letter-spacing:-0.237px;left:468.20px;">AUDUSD,M15</span><div style="left:83px;top:726px;width:1px;height:14px;background:#d0d0d0;"></div><div style="left:358px;top:726px;width:1px;height:14px;background:#d0d0d0;"></div><div style="left:455px;top:726px;width:1px;height:14px;background:#d0d0d0;"></div><div style="left:307px;top:695px;width:160px;height:28px;background:#2d2d2d;box-sizing:border-box;border:1px solid #a4a4a4"></div><span class="t" style="font-size:11.5px;color:#6d6088;top:705px;letter-spacing:-0.660px;left:337.00px;">USDJPY...</span><div style="left:627px;top:695px;width:160px;height:28px;background:#2d2d2d;box-sizing:border-box;border:1px solid #a4a4a4"></div><span class="t" style="font-size:11.5px;color:#6d6088;top:705px;letter-spacing:-0.807px;left:657.00px;">GBPUS...</span><div style="left:787px;top:695px;width:160px;height:28px;background:#2d2d2d;box-sizing:border-box;border:1px solid #a4a4a4"></div><span class="t" style="font-size:11.5px;color:#6d6088;top:705px;letter-spacing:-0.807px;left:817.00px;">EURUS...</span><svg width="1454" height="148" viewBox="0 690 1454 148" style="left:0;top:690px" shape-rendering="crispEdges"><rect x="319" y="704" width="5" height="10" fill="#00d68a"/><rect x="320" y="705" width="3" height="8" fill="#2c3c12"/><rect x="321" y="702" width="1" height="2" fill="#00d68a"/><rect x="321" y="714" width="1" height="2" fill="#00d68a"/><rect x="325" y="703" width="5" height="11" fill="#00d68a"/><rect x="326" y="704" width="3" height="9" fill="#2c3c12"/><rect x="327" y="701" width="1" height="2" fill="#00d68a"/><rect x="327" y="714" width="1" height="3" fill="#00d68a"/><path d="M397.5 706.5h6v5h-3M394.5 709.5h6v5h-6z" fill="none" stroke="#666"/><rect x="421.5" y="706.5" width="8" height="8" fill="none" stroke="#666"/><path shape-rendering="auto" d="M447.5 706.5l8 8M455.5 706.5l-8 8" fill="none" stroke="#666"/><rect x="639" y="704" width="5" height="10" fill="#00d68a"/><rect x="640" y="705" width="3" height="8" fill="#2c3c12"/><rect x="641" y="702" width="1" height="2" fill="#00d68a"/><rect x="641" y="714" width="1" height="2" fill="#00d68a"/><rect x="645" y="703" width="5" height="11" fill="#00d68a"/><rect x="646" y="704" width="3" height="9" fill="#2c3c12"/><rect x="647" y="701" width="1" height="2" fill="#00d68a"/><rect x="647" y="714" width="1" height="3" fill="#00d68a"/><path d="M717.5 706.5h6v5h-3M714.5 709.5h6v5h-6z" fill="none" stroke="#666"/><rect x="741.5" y="706.5" width="8" height="8" fill="none" stroke="#666"/><path shape-rendering="auto" d="M767.5 706.5l8 8M775.5 706.5l-8 8" fill="none" stroke="#666"/><rect x="799" y="704" width="5" height="10" fill="#00d68a"/><rect x="800" y="705" width="3" height="8" fill="#2c3c12"/><rect x="801" y="702" width="1" height="2" fill="#00d68a"/><rect x="801" y="714" width="1" height="2" fill="#00d68a"/><rect x="805" y="703" width="5" height="11" fill="#00d68a"/><rect x="806" y="704" width="3" height="9" fill="#2c3c12"/><rect x="807" y="701" width="1" height="2" fill="#00d68a"/><rect x="807" y="714" width="1" height="3" fill="#00d68a"/><path d="M877.5 706.5h6v5h-3M874.5 709.5h6v5h-6z" fill="none" stroke="#666"/><rect x="901.5" y="706.5" width="8" height="8" fill="none" stroke="#666"/><path shape-rendering="auto" d="M927.5 706.5l8 8M935.5 706.5l-8 8" fill="none" stroke="#666"/><path d="M1424.5 730l-3.5 3.5l3.5 3.5z" fill="#5c5c5c" shape-rendering="auto"/><path d="M1441.5 730l3.5 3.5l-3.5 3.5z" fill="#5c5c5c" shape-rendering="auto"/></svg><span class="t" style="font-size:11.5px;color:#dcdcdc;top:756px;left:206.07px;">Time</span><span class="t" style="font-size:11.5px;color:#dcdcdc;top:756px;left:364.36px;">Type</span><span class="t" style="font-size:11.5px;color:#dcdcdc;top:756px;left:509.34px;">Volume</span><span class="t" style="font-size:11.5px;color:#dcdcdc;top:756px;left:679.30px;">Price</span><span class="t" style="font-size:11.5px;color:#dcdcdc;top:756px;left:838.64px;">S / L</span><span class="t" style="font-size:11.5px;color:#dcdcdc;top:756px;left:995.59px;">T / P</span><span class="t" style="font-size:11.5px;color:#dcdcdc;top:756px;left:1153.10px;">Price</span><span class="t" style="font-size:11.5px;color:#dcdcdc;top:756px;left:1424.05px;">Profit</span><span class="t" style="font-size:11.5px;color:#dcdcdc;top:777px;letter-spacing:-0.350px;left:0.30px;">174</span><span class="t" style="font-size:11.5px;color:#dcdcdc;top:797px;letter-spacing:-0.350px;left:0.30px;">555</span><span class="t" style="font-size:11.5px;color:#dcdcdc;top:777px;letter-spacing:-0.326px;left:134.40px;">2025.11.05 17:03:27</span><span class="t" style="font-size:11.5px;color:#dcdcdc;top:797px;letter-spacing:-0.279px;left:134.40px;">2025.11.05 11:30:00</span><span class="t" style="font-size:11.5px;color:#dcdcdc;top:777px;left:371.21px;">buy</span><span class="t" style="font-size:11.5px;color:#dcdcdc;top:797px;left:371.21px;">buy</span><span class="t" style="font-size:11.5px;color:#dcdcdc;top:777px;left:541.80px;">1</span><span class="t" style="font-size:11.5px;color:#dcdcdc;top:797px;left:541.80px;">1</span><span class="t" style="font-size:11.5px;color:#dcdcdc;top:777px;letter-spacing:-0.362px;left:668.10px;">0.64868</span><span class="t" style="font-size:11.5px;color:#dcdcdc;top:797px;letter-spacing:-0.362px;left:668.10px;">0.81025</span><span class="t" style="font-size:11.5px;color:#dcdcdc;top:777px;letter-spacing:-0.396px;left:808.30px;">0.64805</span><span class="t" style="font-size:11.5px;color:#dcdcdc;top:797px;letter-spacing:-0.396px;left:808.30px;">0.80865</span><span class="t" style="font-size:11.5px;color:#dcdcdc;top:777px;letter-spacing:-0.429px;left:1142.00px;">0.64955</span><span class="t" style="font-size:11.5px;color:#dcdcdc;top:797px;letter-spacing:-0.287px;left:1142.00px;">0.81177</span><span class="t" style="font-size:11.5px;color:#4a8fe0;top:777px;letter-spacing:-0.321px;left:1408.40px;">87.00</span><span class="t" style="font-size:11.5px;color:#4a8fe0;top:797px;letter-spacing:-0.536px;left:1403.40px;">187.25</span><svg width="9" height="9" viewBox="0 0 9 9" style="left:854.9px;top:777.0px"><path d="M1.3 1.3l6.4 6.4M7.7 1.3l-6.4 6.4" stroke="#e4e4e4" stroke-width="1.9" fill="none"/></svg><svg width="9" height="9" viewBox="0 0 9 9" style="left:854.9px;top:797.0px"><path d="M1.3 1.3l6.4 6.4M7.7 1.3l-6.4 6.4" stroke="#e4e4e4" stroke-width="1.9" fill="none"/></svg><svg width="9" height="9" viewBox="0 0 9 9" style="left:1444.2px;top:777.0px"><path d="M1.3 1.3l6.4 6.4M7.7 1.3l-6.4 6.4" stroke="#e4e4e4" stroke-width="1.9" fill="none"/></svg><svg width="9" height="9" viewBox="0 0 9 9" style="left:1444.2px;top:797.0px"><path d="M1.3 1.3l6.4 6.4M7.7 1.3l-6.4 6.4" stroke="#e4e4e4" stroke-width="1.9" fill="none"/></svg><span class="t" style="font-size:11.5px;color:#dcdcdc;top:817px;font-weight:700;letter-spacing:-0.162px;left:-5.50px;">0.51</span><span class="t" style="font-size:11.5px;color:#dcdcdc;top:817px;font-weight:700;letter-spacing:0.121px;left:24.50px;">Margin: 1 648.68</span><span class="t" style="font-size:11.5px;color:#dcdcdc;top:817px;font-weight:700;letter-spacing:0.163px;left:123.40px;">Free Margin: 99 121.83</span><span class="t" style="font-size:11.5px;color:#dcdcdc;top:817px;font-weight:700;letter-spacing:0.133px;left:257.90px;">Margin Level: 6 112.19 %</span><span class="t" style="font-size:11.5px;color:#dcdcdc;top:817px;font-weight:700;letter-spacing:0.264px;left:1398.40px;">274.25</span></body></html>
